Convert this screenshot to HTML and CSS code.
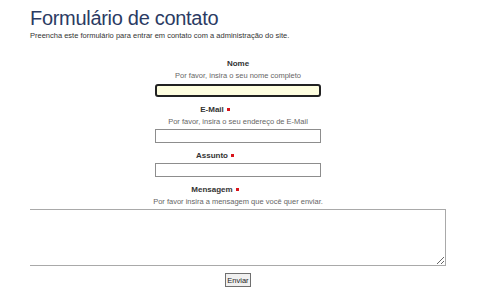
FILE: index.html
```html
<!DOCTYPE html>
<html lang="pt">
<head>
  <meta charset="UTF-8" />
  <title>Formulário de contato</title>
  <link rel="stylesheet" href="styles.css">
</head>
<body>
  <header class="page-head">
    <h1>Formulário de contato</h1>
    <p class="intro">Preencha este formulário para entrar em contato com a administração do site.</p>
  </header>

  <form class="contact-form" onsubmit="return false">
    <div class="field field-first">
      <label for="nome">Nome</label>
      <div class="hint">Por favor, insira o seu nome completo</div>
      <input type="text" id="nome" class="input input-focus" />
    </div>
    <div class="field">
      <label for="email" class="required">E-Mail<span class="mark"></span></label>
      <div class="hint">Por favor, insira o seu endereço de E-Mail</div>
      <input type="text" id="email" class="input" />
    </div>
    <div class="field">
      <label for="assunto" class="required">Assunto<span class="mark"></span></label>
      <input type="text" id="assunto" class="input" />
    </div>
    <div class="field">
      <label for="mensagem" class="required">Mensagem<span class="mark"></span></label>
      <div class="hint">Por favor insira a mensagem que você quer enviar.</div>
      <textarea id="mensagem" class="message"></textarea>
    </div>
    <button type="submit" class="send">Enviar</button>
  </form>
</body>
</html>
```

FILE: styles.css
```css
* {
  box-sizing: border-box;
}
body {
  margin: 0;
  font-family: 'Liberation Sans', Arial, sans-serif;
  background: #fff;
  color: #333;
}

/* Header */
.page-head {
  padding: 6px 0 0 30px;
}
.page-head h1 {
  margin: 0;
  font-size: 20px;
  line-height: 24px;
  font-weight: normal;
  color: #2b3b63;
  letter-spacing: -0.3px;
}
.intro {
  margin: 1px 0 0;
  font-size: 7.5px;
  line-height: 10px;
  color: #333;
}

/* Form */
.contact-form {
  width: 416px;
  margin: 0 0 0 30px;
  display: flex;
  flex-direction: column;
  align-items: center;
}
.field {
  display: flex;
  flex-direction: column;
  align-items: center;
  width: 100%;
  margin-top: 7px;
}
.field-first {
  margin-top: 17px;
}
.field label {
  font-size: 8px;
  line-height: 12px;
  font-weight: bold;
  color: #333;
}
.field label.required {
  padding-right: 46px;
}
.mark {
  display: inline-block;
  width: 3px;
  height: 3px;
  margin-left: 3px;
  background: #d9141b;
  vertical-align: middle;
}
.hint {
  font-size: 7.5px;
  line-height: 12px;
  color: #666;
}
.input {
  width: 166px;
  height: 14px;
  margin-top: 1px;
  padding: 0 3px;
  border: 1px solid #8d8d8d;
  font: inherit;
}
.input-focus {
  margin-top: 2px;
  height: 13px;
  border: 2px solid #222;
  border-radius: 3px;
  background: #ffffe0;
}
.message {
  width: 100%;
  height: 57px;
  margin-top: 1px;
  border: 1px solid #a9a9a9;
  border-left: 0;
  padding: 2px;
  font: inherit;
}
.send {
  margin-top: 7px;
  height: 14px;
  padding: 0 1px;
  border: 1px solid #6f6f6f;
  border-radius: 0;
  background: #f0f0f0;
  font-family: 'Liberation Sans', Arial, sans-serif;
  font-size: 7.5px;
  color: #222;
}
```
